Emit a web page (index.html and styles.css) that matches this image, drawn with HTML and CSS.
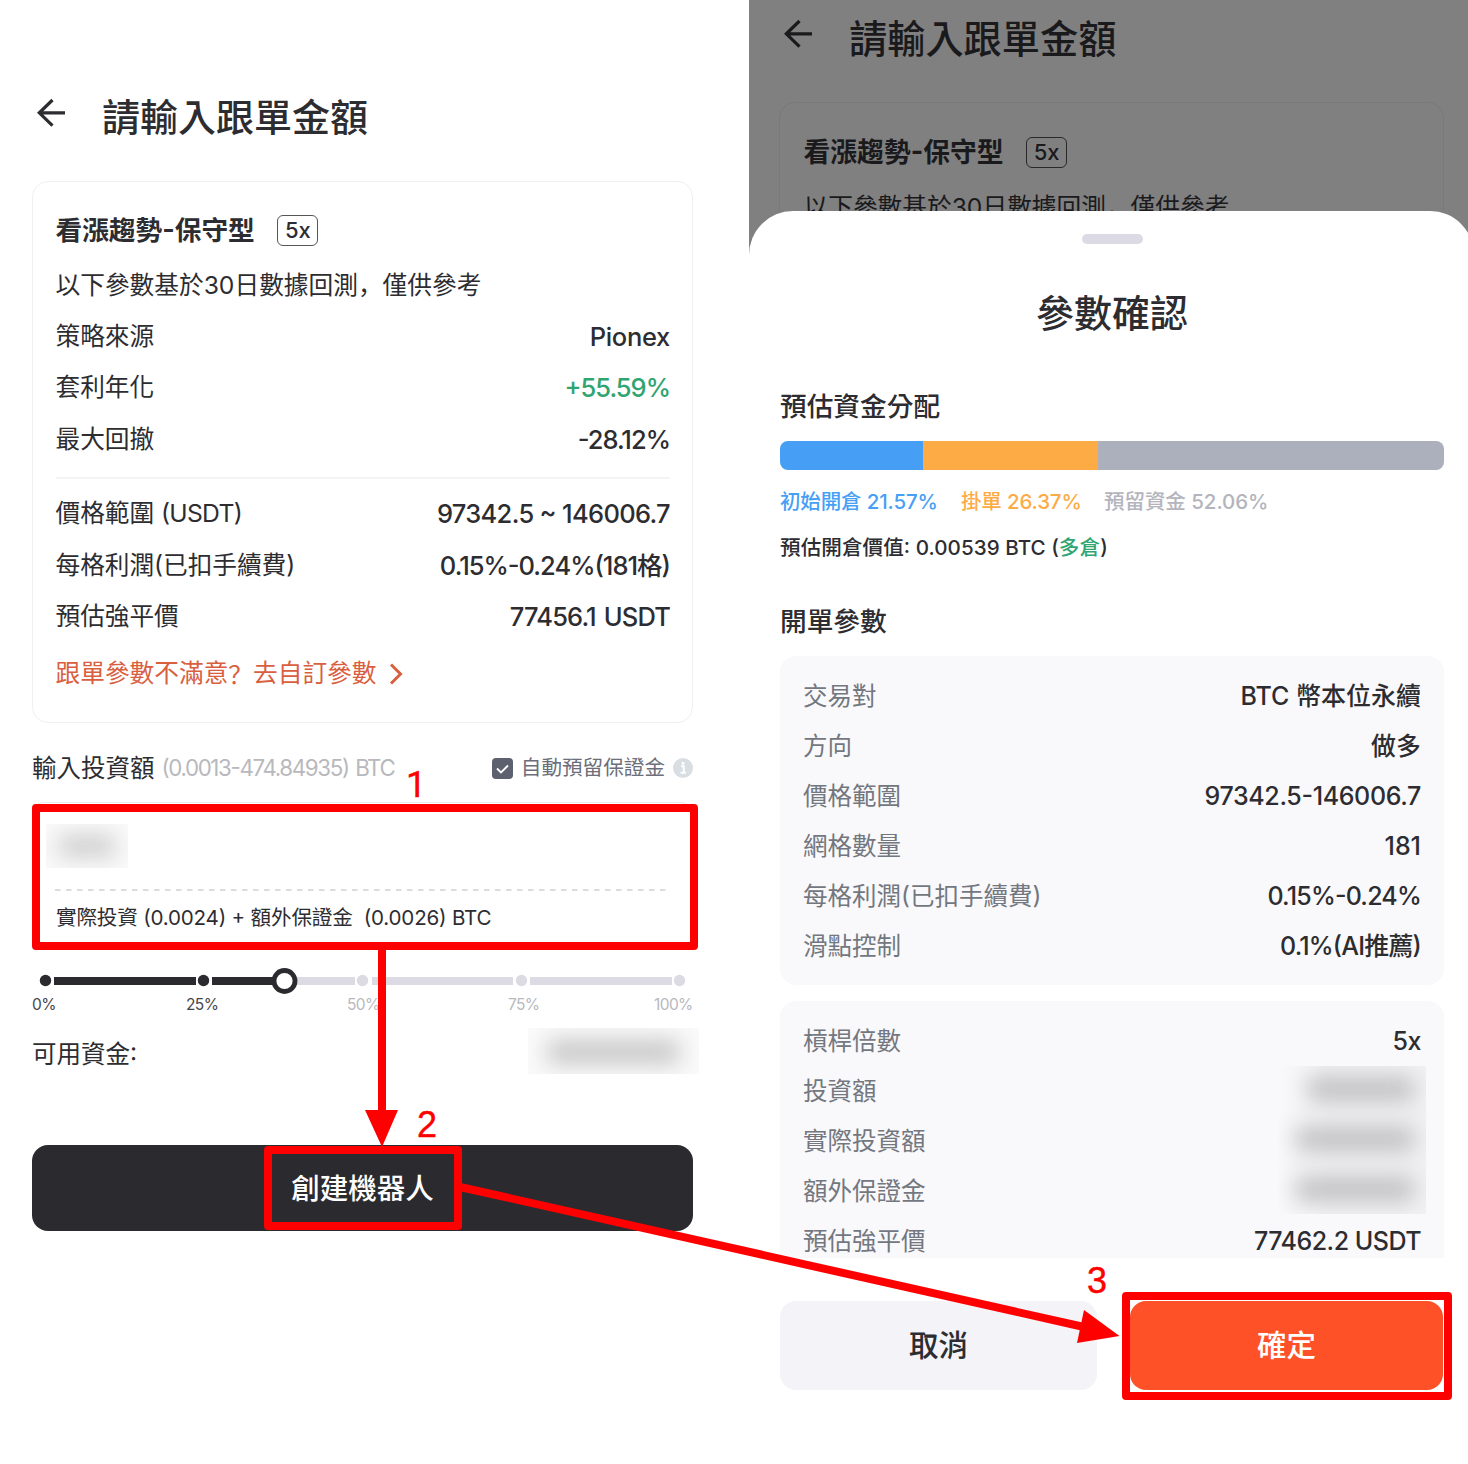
FILE: index.html
```html
<!DOCTYPE html>
<html lang="zh-Hant">
<head>
<meta charset="utf-8">
<title>請輸入跟單金額</title>
<link rel="stylesheet" href="styles.css">
</head>
<body>
<main class="board">
  <section class="screen screen-form">
    <header class="topbar">
      <svg class="back" viewBox="0 0 30 30" width="30" height="30"><path d="M29 14.800H3M16.500 2L3.300 14.800L16.500 27.600" fill="none" stroke="currentColor" stroke-width="3.200"/></svg>
      <h1 class="page-title">請輸入跟單金額</h1>
    </header>

    <div class="card">
      <div class="card-title"><b>看漲趨勢<span class="dash">-</span>保守型</b><span class="lever">5x</span></div>
      <p class="card-desc">以下參數基於30日數據回測<span class="punct" lang="zh-Hans">，</span>僅供參考</p>
      <dl class="rows">
        <div class="row"><dt>策略來源</dt><dd class="name">Pionex</dd></div>
        <div class="row"><dt>套利年化</dt><dd class="green tighter">+55.59%</dd></div>
        <div class="row"><dt>最大回撤</dt><dd class="tighter">-28.12%</dd></div>
      </dl>
      <hr class="rule">
      <dl class="rows">
        <div class="row"><dt>價格範圍 <span class="unit">(USDT)</span></dt><dd>97342.5 ~ 146006.7</dd></div>
        <div class="row"><dt>每格利潤(已扣手續費)</dt><dd class="tighter">0.15%-0.24%(181格)</dd></div>
        <div class="row"><dt>預估強平價</dt><dd class="spaced">77456.1 USDT</dd></div>
      </dl>
      <a class="custom-link">跟單參數不滿意<span class="punct" lang="zh-Hans">？</span>去自訂參數<svg viewBox="0 0 14 22" width="14" height="22"><path d="M2 1.500L11.500 11L2 20.500" fill="none" stroke="currentColor" stroke-width="3"/></svg></a>
    </div>

    <div class="field-head">
      <span class="field-label">輸入投資額</span>
      <span class="field-range">(0.0013-474.84935) BTC</span>
      <span class="check"><svg viewBox="0 0 21 21" width="21" height="21"><rect width="21" height="21" rx="4" fill="#5d606e"/><path d="M5 10.500L9 14.500L16 7.500" fill="none" stroke="#fff" stroke-width="1.800"/></svg></span>
      <span class="check-label">自動預留保證金</span>
      <svg class="info" viewBox="0 0 20 20" width="20" height="20"><circle cx="10" cy="10" r="10" fill="#d9dee3"/><path d="M8 8.300H10.800V14.500M7.500 14.800H13" fill="none" stroke="#fff" stroke-width="1.900"/><circle cx="10" cy="5.300" r="1.500" fill="#fff"/></svg>
    </div>

    <div class="field">
      <div class="mask mask-amount"><i></i></div>
      <svg class="dashes" width="614" height="2" viewBox="0 0 614 2"><path d="M0 1H614" stroke="#dcdce0" stroke-width="2" stroke-dasharray="5.500 5.500"/></svg>
      <p class="breakdown">實際投資 (0.0024) + 額外保證金&nbsp; (0.0026) BTC</p>
    </div>

    <svg class="slider" viewBox="0 0 662 28" width="662" height="28">
      <g stroke="#dcdbe3" stroke-width="8"><path d="M252 15H323M340 15H481M498 15H640"/></g>
      <g stroke="#2b2a2f" stroke-width="8"><path d="M22 15H164M180 15H252"/></g>
      <g fill="#2b2a2f"><circle cx="13.500" cy="14.500" r="5.700"/><circle cx="171.500" cy="14.500" r="5.700"/></g>
      <g fill="#dcdbe3"><circle cx="330.500" cy="14.500" r="5.700"/><circle cx="489.500" cy="14.500" r="5.700"/><circle cx="647.500" cy="14.500" r="5.700"/></g>
      <circle cx="252.500" cy="15" r="10.500" fill="#fff" stroke="#2b2a2f" stroke-width="4.800"/>
    </svg>
    <div class="ticks"><span class="on">0%</span><span class="on">25%</span><span>50%</span><span>75%</span><span>100%</span></div>

    <div class="funds"><span>可用資金:</span><div class="mask mask-funds"><i></i></div></div>

    <div class="create">創建機器人</div>
  </section>

  <section class="screen screen-confirm">
    <div class="behind">
      <header class="topbar">
        <svg class="back" viewBox="0 0 30 30" width="30" height="30"><path d="M29 14.800H3M16.500 2L3.300 14.800L16.500 27.600" fill="none" stroke="currentColor" stroke-width="3.200"/></svg>
        <h2 class="page-title">請輸入跟單金額</h2>
      </header>
      <div class="card">
        <div class="card-title"><b>看漲趨勢<span class="dash">-</span>保守型</b><span class="lever">5x</span></div>
        <p class="card-desc">以下參數基於30日數據回測<span class="punct" lang="zh-Hans">，</span>僅供參考</p>
      </div>
    </div>

    <div class="sheet">
      <div class="grip"></div>
      <h2 class="sheet-title">參數確認</h2>
      <h3 class="section-title">預估資金分配</h3>
      <div class="split"><i class="s-open" style="width:21.570%"></i><i class="s-order" style="width:26.370%"></i><i class="s-keep"></i></div>
      <div class="legend"><span class="l-open">初始開倉 21.57%</span><span class="l-order">掛單 26.37%</span><span class="l-keep">預留資金 52.06%</span></div>
      <p class="value-line">預估開倉價值: 0.00539 BTC (<span class="green">多倉</span>)</p>
      <h3 class="section-title second">開單參數</h3>
      <dl class="panel">
        <div class="row"><dt>交易對</dt><dd class="name">BTC 幣本位永續</dd></div>
        <div class="row"><dt>方向</dt><dd class="name">做多</dd></div>
        <div class="row"><dt>價格範圍</dt><dd>97342.5-146006.7</dd></div>
        <div class="row"><dt>網格數量</dt><dd class="name">181</dd></div>
        <div class="row"><dt>每格利潤(已扣手續費)</dt><dd class="tight">0.15%-0.24%</dd></div>
        <div class="row"><dt>滑點控制</dt><dd class="tight">0.1%(AI推薦)</dd></div>
      </dl>
      <div class="panel panel-cut">
        <dl class="panel-names">
          <dt>槓桿倍數</dt><dt>投資額</dt><dt>實際投資額</dt><dt>額外保證金</dt><dt>預估強平價</dt>
        </dl>
        <div class="panel-values">
          <span>5x</span>
          <div class="mask mask-values"><i class="short"></i><i></i><i></i></div>
          <span>77462.2 USDT</span>
        </div>
      </div>
      <div class="actions"><div class="btn cancel">取消</div><div class="btn confirm">確定</div></div>
    </div>
  </section>

  <svg class="marks" viewBox="0 0 1468 1464" width="1468" height="1464">
    <g fill="none" stroke="#f00" stroke-width="8" stroke-linejoin="round">
      <rect x="36" y="808" width="658" height="138"/>
      <rect x="268" y="1150" width="190" height="76"/>
      <rect x="1126" y="1296" width="322" height="100"/>
      <path d="M382 946V1114M460 1187L1084 1327"/>
    </g>
    <path d="M365 1110H398L382 1147ZM1084 1310L1119.500 1336L1077 1343Z" fill="#f00"/>
    <g class="mark-no"><text class="one" x="406" y="797">1</text><text x="417" y="1137">2</text><text x="1087" y="1293">3</text></g>
  </svg>
</main>
</body>
</html>
```
FILE: styles.css
```css
* { box-sizing: border-box; }
body {
  margin: 0;
  background: #fff;
  color: #2d2d31;
  font-family: Inter, "Noto Sans CJK TC", sans-serif;
  font-feature-settings: "case";
}
h1, h2, h3, p, dl, dt, dd { margin: 0; font-weight: 400; }
.board { position: relative; display: flex; width: 1468px; height: 1464px; overflow: hidden; }
.screen { display: flex; flex-direction: column; }
.screen-form { width: 749px; padding: 88px 56px 0 32px; }

.topbar { display: flex; height: 60px; margin-bottom: 33px; padding-left: 4px; }
.back { margin-top: 10px; }
.page-title { margin-left: 36px; font-size: 38px; line-height: 58px; font-weight: 500; white-space: nowrap; }

.card {
  height: 542px;
  padding: 21px 22px 0 22.500px;
  border: 1.500px solid #f0f0f2;
  border-radius: 16px;
}
.card-title { display: flex; align-items: center; height: 54px; font-size: 26.700px; line-height: 40px; }
.card-title b { font-weight: 700; }
.dash { display: inline-block; width: 12.500px; text-align: center; }
.lever {
  width: 41px; height: 31px; margin: 1px 0 0 22.500px;
  border: 1.300px solid #55555a; border-radius: 6px;
  font-size: 22px; line-height: 29px; font-weight: 500; text-align: center;
}
.card-desc { height: 54px; font-size: 24.700px; line-height: 53px; white-space: nowrap; }
.punct { font-family: "Noto Sans CJK SC", sans-serif; }
.row { display: flex; justify-content: space-between; height: 51.400px; line-height: 51.400px; font-size: 24.700px; }
.row dt { letter-spacing: -0.050px; }
.row .unit { letter-spacing: -0.700px; }
.row dd { font-size: 25.500px; font-weight: 500; letter-spacing: -0.680px; }
.row dd.tighter { letter-spacing: -1px; }
.row dd.spaced { letter-spacing: -0.850px; word-spacing: 2px; }
.row dd.name { letter-spacing: -0.300px; }
.green, .row dd.green { color: #2fa571; }
.rule { height: 2px; margin: 12px 0 9px; border: 0; background: #f4f4f6; }
.custom-link { display: flex; align-items: center; height: 62px; color: #d9603f; font-size: 24.700px; line-height: 40px; }
.custom-link svg { margin: 2px 0 0 13px; }

.field-head { display: flex; align-items: center; height: 40px; margin-top: 25px; font-size: 24.500px; line-height: 40px; white-space: nowrap; }
.field-range { width: 236px; margin-left: 7px; color: #b8b8bd; font-size: 22.300px; letter-spacing: -1.350px; word-spacing: 1.500px; }
.check { display: flex; margin-left: auto; }
.check-label { margin-left: 8px; color: #6c6e79; font-size: 20.600px; }
.info { margin-left: 8px; }
.field { height: 146px; margin-top: 14px; padding: 21px 23px 0 13px; border: 1px solid #e9eaee; border-radius: 12px; }
.dashes { display: block; margin: 21px 0 0 9px; }
.breakdown { margin-left: 10px; font-size: 20.600px; line-height: 54px; letter-spacing: -0.200px; white-space: pre; }
.mask { flex: none; overflow: hidden; }
.mask i { display: block; }
.mask-amount { width: 82px; height: 44px; padding: 11px 13px; background: #fafafa; }
.mask-amount i { height: 22px; background: #cdcdcd; filter: blur(11px); }

.slider { display: block; margin-top: 18px; }
.ticks { display: grid; grid-template-columns: 154px 161px 161px 146px auto; height: 20px; font-size: 15.500px; line-height: 21px; letter-spacing: -0.600px; color: #b8b8bd; }
.ticks .on { color: #46464a; }
.funds { display: flex; justify-content: space-between; width: 667px; height: 46px; margin-top: 14px; font-size: 24.500px; line-height: 52px; }
.mask-funds { width: 171px; height: 46px; padding: 12px 20px; background: #fafafa; }
.mask-funds i { height: 24px; background: #c6c6c6; filter: blur(11px); }
.create {
  height: 86px; margin-top: 71px; border-radius: 16px;
  background: #2b2a2f; color: #fff;
  font-size: 28.500px; line-height: 88px; font-weight: 500; text-align: center;
}

.screen-confirm { position: relative; width: 725px; flex: none; background: #808080; }
.behind { height: 211px; padding: 9px 30px 0; overflow: hidden; color: #1a1a1d; }
.behind .page-title { font-size: 38.200px; line-height: 60px; }
.behind .card { padding: 22px 22px 0 23.500px; border-color: #797979; }
.behind .card-title { font-size: 26.800px; }
.behind .lever { border-color: #29292c; }
.sheet {
  display: flex; flex-direction: column;
  flex: 1; padding: 23px 30px 0 31px;
  border-radius: 44px 44px 0 0; background: #fff;
}
.grip { width: 61px; height: 10px; margin: 0 auto; border-radius: 5px; background: #dcdbe5; }
.sheet-title { margin-top: 39px; font-size: 38px; line-height: 60px; height: 60px; font-weight: 500; text-align: center; }
.section-title { margin-top: 43px; font-size: 26.700px; line-height: 40px; font-weight: 500; }
.split { display: flex; height: 29px; margin-top: 15px; border-radius: 8px; overflow: hidden; }
.s-open { background: #479ff5; }
.s-order { background: #fdab45; }
.s-keep { flex: 1; background: #acafbc; }
.legend { display: flex; height: 40px; margin-top: 12px; line-height: 40px; font-size: 20.500px; font-weight: 500; letter-spacing: -0.150px; white-space: nowrap; }
.l-open { width: 181px; color: #479ff5; }
.l-order { width: 143px; color: #fdab45; }
.l-keep { color: #b3b4bc; letter-spacing: -0.050px; }
.value-line { margin-top: 6px; font-size: 20.600px; line-height: 40px; font-weight: 500; letter-spacing: 0.050px; }
.section-title.second { margin-top: 33px; }
.panel { height: 329px; margin-top: 15px; padding: 15px 23px 0; border-radius: 16px; background: #f9f9fb; }
.panel .row { height: 50px; line-height: 50px; }
.panel dt { color: #73777f; font-size: 24.500px; letter-spacing: 0; }
.panel dd { font-size: 25px; letter-spacing: -0.350px; }
.panel dd.tight { letter-spacing: -0.800px; }
.panel dd.name { letter-spacing: 0; }
.panel-cut { display: flex; justify-content: space-between; height: 257px; margin-top: 16px; padding-right: 18px; border-radius: 16px 16px 0 0; overflow: hidden; }
.panel-cut dt { height: 50px; line-height: 50px; }
.panel-values { display: flex; flex-direction: column; align-items: flex-end; font-size: 25px; font-weight: 500; line-height: 50px; letter-spacing: -0.500px; }
.panel-values span { height: 50px; margin-right: 5px; }
.mask-values { width: 148px; height: 148px; margin-bottom: 2px; padding: 11px 12px 0 18px; background: linear-gradient(90deg, #f9f9fb, #f2f2f4 35%); }
.mask-values i { height: 24px; margin-bottom: 26px; background: #bfbfc2; filter: blur(11px); }
.mask-values .short { margin-left: 12px; }
.actions { display: flex; gap: 33px; margin-top: 43px; }
.btn { flex: none; width: 317px; height: 89px; border-radius: 16px; font-size: 29.500px; line-height: 89px; font-weight: 500; text-align: center; }
.cancel { background: #f3f3f8; }
.confirm { width: 313px; background: #ff5128; color: #fff; }

/* Step frames and arrows drawn over both screens */
.marks { position: absolute; left: 0; top: 0; }
.mark-no { fill: #f00; stroke: #f00; stroke-width: 0.400px; font: 36px "Liberation Sans", sans-serif; }
.mark-no .one { font-family: Roboto, sans-serif; }
```
